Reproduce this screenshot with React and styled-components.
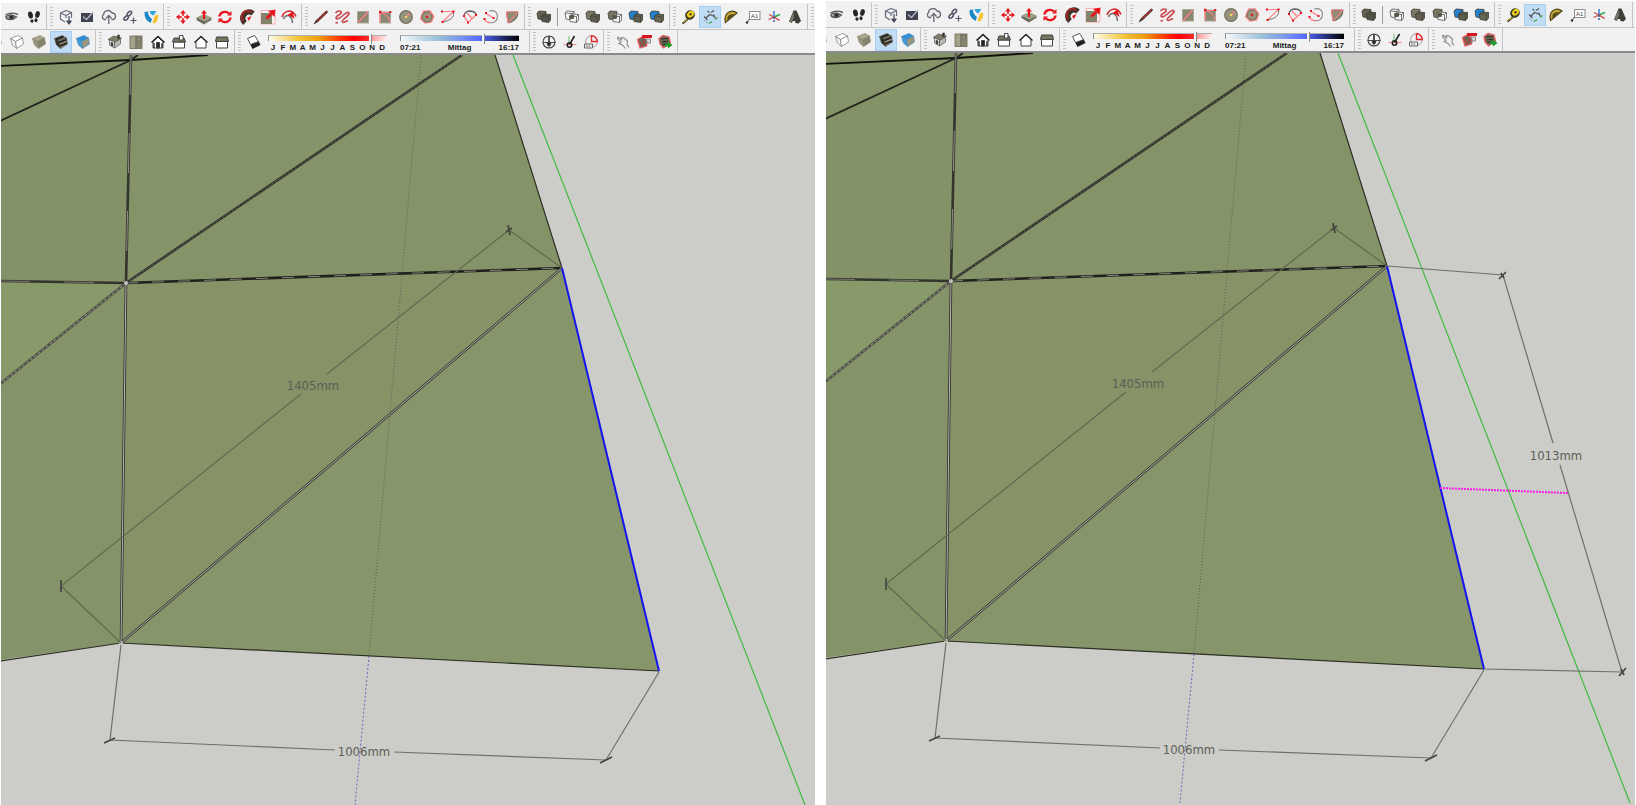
import React, { useState } from "react";
import styled, { createGlobalStyle } from "styled-components";

const colors = {
  bar: "#f1f1f1",
  line: "#c4c4c4",
  dark: "#8a8a8c",
  active: "#c1ddf5",
  activeBorder: "#a5d0f3",
  sky: "#ccccc8",
  red: "#e8141c",
  pink: "#ff7f86",
};

const GlobalStyle = createGlobalStyle`
  * {
    box-sizing: border-box;
  }
  body {
    margin: 0;
    background: #ffffff;
    font-family: "Liberation Sans", Arial, sans-serif;
  }
`;

const Cube = ({ top, left, right, edge = "#5c5a4c" }) => (
  <g stroke={edge} strokeWidth="0.7" strokeLinejoin="round">
    <path d="M3.500 6.500 L11 3.500 L15.500 6 L8.500 9.500Z" fill={top} />
    <path d="M3.500 6.500 L8.500 9.500 L9.500 16.500 L5.500 13Z" fill={left} />
    <path d="M8.500 9.500 L15.500 6 L16.500 12 L9.500 16.500Z" fill={right} />
  </g>
);

const Solids = ({ back, front, wireBack, wireFront }) => (
  <g strokeWidth="0.8" strokeLinejoin="round">
    <path
      d="M3 6 L5 4 L12 4.500 L12 11 L10 13 L4 12Z"
      fill={wireBack ? "#f4f4f4" : back}
      stroke={wireBack ? "#555" : "#3d3c33"}
    />
    {wireBack && <path d="M3 6 L10 6.500 L12 4.500 M10 6.500 L10 13" fill="none" stroke="#555" />}
    <path
      d="M7.500 9 L10 7 L16.500 7.500 L16.500 13 L14.500 15.500 L8 14.500Z"
      fill={wireFront ? "#f4f4f4" : front}
      stroke={wireFront ? "#555" : "#3d3c33"}
    />
    <path
      d="M7.500 9 L14.500 9.500 L16.500 7.500 M14.500 9.500 L14.500 15.500"
      fill="none"
      stroke={wireFront ? "#555" : "#45443a"}
    />
    {wireFront && <path d="M7.500 8.500 L12 7.500 V11.500 L8 12.500Z" fill="#5a584a" />}
  </g>
);

const House = ({ children }) => (
  <g stroke="#444" strokeWidth="1" strokeLinejoin="round">
    {children}
  </g>
);

const icons = {
  eye: (
    <g fill="none" stroke="#555" strokeWidth="1.400">
      <path d="M3.500 8 Q9 4.500 16 7.500" />
      <path d="M4 9.500 Q9 6.500 14.500 10 Q10 14 4.500 11.500Z" fill="#b5b5b5" />
      <circle cx="9.500" cy="10.300" r="2" fill="#222" />
    </g>
  ),
  steps: (
    <g fill="#262626">
      <ellipse cx="6.500" cy="8" rx="2.400" ry="3.600" transform="rotate(-12 6.500 8)" />
      <ellipse cx="8" cy="14" rx="1.600" ry="1.800" />
      <ellipse cx="13.500" cy="7.500" rx="2.300" ry="3.400" transform="rotate(14 13.500 7.500)" />
      <ellipse cx="12" cy="13.200" rx="1.500" ry="2" />
    </g>
  ),
  download: (
    <g fill="none" stroke="#66697a" strokeWidth="1.200" strokeLinejoin="round">
      <path d="M9 15 L4.500 12 L4.500 6 L10 3.500 L15.500 5.500 L15.500 11 M4.500 6 L10 8.500 L15.500 5.500 M10 8.500 L10 11" />
      <path d="M13 9 V16 M10.800 14 L13 17 L15.200 14Z" fill="#44475a" stroke="#44475a" />
    </g>
  ),
  picture: (
    <g>
      <rect x="4" y="6" width="12" height="9" fill="#3f4252" />
      <path d="M6 9.500 L9.500 12.500 L16 5" fill="none" stroke="#b3b5c0" strokeWidth="1.300" />
    </g>
  ),
  cloud: (
    <g fill="none" stroke="#666974" strokeWidth="1.300">
      <path d="M7 12.500 H5 A3 3 0 0 1 4.500 7.500 A4.500 4.500 0 0 1 13 6 A3.400 3.400 0 0 1 14.500 12.500 H12.500" />
      <path d="M9.800 17 V9 M7 11.500 L9.800 8.500 L12.600 11.500" />
    </g>
  ),
  link: (
    <g fill="none" stroke="#55586a" strokeWidth="1.500">
      <ellipse cx="6.200" cy="11" rx="2.700" ry="1.600" transform="rotate(-45 6.200 11)" />
      <ellipse cx="9.400" cy="6.500" rx="2.700" ry="1.600" transform="rotate(-45 9.400 6.500)" />
      <path d="M13.500 10.500 V16.500 M10.500 13.500 H16.500" strokeWidth="1.200" />
    </g>
  ),
  globe: (
    <g>
      <path d="M3.500 5 L7 4.500 Q7 9 11 12 L9.500 16 Q3 12.500 3.500 5Z" fill="#1b86c8" />
      <path d="M8.500 4 H15.500 L12.500 8.500 Q9.500 8 8.500 4Z" fill="#39a6dd" />
      <path d="M14 8.500 L17 7.500 Q18 13 13.500 16.500 L11.500 15.500 L13 11.500Z" fill="#f6c22c" />
    </g>
  ),
  move: (
    <g fill={colors.red}>
      <path d="M10 3 L12.800 6.500 H7.200Z M10 17 L12.800 13.500 H7.200Z M3 10 L6.500 7.200 V12.800Z M17 10 L13.500 7.200 V12.800Z" />
      <path d="M10 6 V14 M6 10 H14" stroke={colors.red} strokeWidth="1.600" />
      <circle cx="10" cy="10" r="1.200" fill="#fff" />
    </g>
  ),
  push: (
    <g>
      <path d="M2.500 10.500 L10 7 L17.500 10.500 L10 14Z" fill="#a09d86" />
      <path d="M2.500 10.500 L10 14 V17.500 L2.500 13Z" fill="#6a685a" />
      <path d="M17.500 10.500 L10 14 V17.500 L17.500 13Z" fill="#7a7765" />
      <path d="M9 12 V6.500 H7 L10 3 L13 6.500 H11 V12Z" fill={colors.red} />
    </g>
  ),
  rotate: (
    <g fill="none" stroke={colors.red} strokeWidth="2.400">
      <path d="M4.500 9.500 A5.500 5 0 0 1 14 6.500" />
      <path d="M15.500 10.500 A5.500 5 0 0 1 6 13.500" />
      <path d="M12 8.500 H16.500 V4Z M8 11.500 H3.500 V16Z" fill={colors.red} stroke="none" />
    </g>
  ),
  follow: (
    <g fill="none">
      <path d="M8 16 A5.500 5.500 0 0 1 16 6.500" stroke="#3d3326" strokeWidth="5.500" />
      <path d="M6.500 14 A5.500 5.500 0 0 1 14.500 5.500" stroke="#a32626" strokeWidth="2" />
      <path d="M10 11 L14.500 9 L12 14Z" fill={colors.red} />
    </g>
  ),
  scale: (
    <g>
      <path d="M3 3.500 H17 V17 H3Z" fill="none" stroke="#ffb0b4" />
      <rect x="3" y="6" width="11" height="11" fill="#85826c" />
      <path d="M8.500 11.500 L13 7" stroke={colors.red} strokeWidth="2.600" />
      <path d="M10 4 L17.500 2.500 L16.500 10Z" fill={colors.red} />
    </g>
  ),
  offset: (
    <g fill="none" strokeWidth="1.600">
      <path d="M3 10 Q5 4 11 4 Q15 5 17 9.500" stroke="#d22c30" />
      <path d="M4.500 12 Q6 8 9.500 8.500 Q13 10 13.500 16" stroke="#777" />
      <path d="M8 8.500 L13.500 4.500 L15.500 12 L12 9.500Z" fill={colors.red} />
    </g>
  ),
  pencil: (
    <g strokeLinecap="round">
      <path d="M5.500 14.500 L15.500 5" stroke="#6d3434" strokeWidth="2.600" />
      <path d="M3.500 16.500 L6 14" stroke="#333" strokeWidth="1.200" />
      <path d="M6.500 13.500 L15 5.500" stroke="#c03a3c" strokeWidth="1" />
    </g>
  ),
  freehand: (
    <path
      d="M3.500 6 Q6 3 9 4.500 Q10 6.500 6 8.500 Q2.500 11 5 12 Q8 11.500 12 7.500 Q17 3.500 17 7 Q15 10 12 12 Q8.500 15 11.500 15.500 L16 13.500 M3.500 16 L6 15.500"
      fill="none"
      stroke="#c9474c"
      strokeWidth="1.600"
    />
  ),
  rect: (
    <g>
      <rect x="4.500" y="4.500" width="11" height="11.500" fill="#8a8772" stroke="#aaa897" />
      <path d="M5 15.500 L15 5" stroke={colors.pink} strokeWidth="1.200" />
    </g>
  ),
  rotRect: (
    <g>
      <rect x="5" y="5" width="10.500" height="11" fill="#8a8772" stroke="#aaa897" />
      <path d="M5 15.500 V5 Q13 7 15.500 15.500 M5 5.500 H15" fill="none" stroke={colors.pink} strokeWidth="1.200" />
      <path d="M4 3.800 h2.400 v2.400 h-2.400Z M14.300 4 h2 v2 h-2Z" fill={colors.red} />
    </g>
  ),
  circle: (
    <g>
      <circle cx="10" cy="10" r="6.300" fill="#96937d" stroke="#74725f" strokeWidth="1.200" />
      <path d="M10 10 L14 6.500" stroke={colors.pink} strokeWidth="1.200" />
      <circle cx="10" cy="10" r="1.300" fill="#f0d060" />
    </g>
  ),
  polygon: (
    <g>
      <path
        d="M6.500 4 L13 3.800 L16.800 9 L14.500 15 L8 16 L3.500 11.500Z"
        fill="#96937d"
        stroke={colors.pink}
        strokeWidth="1.200"
      />
      <circle cx="10" cy="10" r="5" fill="#96937d" stroke="#77745f" />
      <path d="M10 10 L14 6.500" stroke={colors.pink} />
      <circle cx="10" cy="10" r="1.200" fill={colors.red} />
    </g>
  ),
  arc: (
    <g fill="none">
      <path d="M15.500 5 Q17 13 4.500 15" stroke="#77777a" />
      <path d="M4 4.500 H15.500 L4.500 15" stroke={colors.pink} strokeWidth="1.100" />
      <path d="M3 3.500 h2 v2 h-2Z M14.500 3.500 h2 v2 h-2Z M3.500 14 h2 v2 h-2Z" fill={colors.red} />
    </g>
  ),
  arc2: (
    <g fill="none">
      <path d="M4 9 Q4.500 4 10.500 4 Q16 4.500 16 8.500" stroke="#66666a" strokeWidth="1.300" />
      <path d="M4 9 L8 15.500 L16 8 M7 6 L12 11.500" stroke={colors.pink} strokeWidth="1.200" />
      <path d="M3 8 h2 v2 h-2Z M7 14.500 h2 v2 h-2Z M15 7 h2 v2 h-2Z" fill={colors.red} />
    </g>
  ),
  arc3: (
    <g fill="none">
      <path d="M8 4 Q16 2.500 16.500 9 Q16 17 8 15.500" stroke="#8a8a8c" strokeWidth="1.200" />
      <path d="M5 6.500 L12.500 11 M3.500 12 Q5 16 10 15.500" stroke={colors.pink} strokeWidth="1.200" />
      <path d="M4 5 h2 v2 h-2Z M11.500 10 h2 v2 h-2Z M2.500 11 h2 v2 h-2Z" fill={colors.red} />
    </g>
  ),
  pie: (
    <g>
      <path d="M4.500 5 H16 Q16 14 6 16Z" fill="#8f8c76" stroke="#666453" />
      <path d="M6 16 L16 5 M4.500 5 H16 M4.500 5 L6 16" stroke={colors.pink} strokeWidth="1.100" />
    </g>
  ),
  outer: <Solids back="#64624f" front="#56544a" />,
  intersect: <Solids wireBack wireFront />,
  union: <Solids back="#7c7963" front="#625f50" />,
  subtract: <Solids back="#77745f" wireFront />,
  trim: <Solids back="#2182cf" front="#605e4f" />,
  split: <Solids back="#2182cf" front="#6a6856" />,
  tape: (
    <g>
      <path d="M9 12 L3.500 16.500" stroke="#222" strokeWidth="1.800" />
      <ellipse cx="11" cy="8" rx="5" ry="4.600" fill="#3a3620" transform="rotate(-40 11 8)" />
      <ellipse cx="11.500" cy="7.300" rx="3.800" ry="3" fill="#f2d21c" transform="rotate(-40 11.500 7.300)" />
      <circle cx="11.500" cy="7.200" r="1.200" fill="#4b4530" />
      <path d="M8.500 12.500 L3.500 15.500" stroke="#e7cd2a" strokeWidth="1" />
    </g>
  ),
  dimension: (
    <g fill="none">
      <path d="M5.500 11.500 L9.500 7.500 L14.500 9.500" stroke="#555" strokeWidth="1.200" />
      <path d="M7.500 4 L9.500 5.500 M11 5.500 L14 3.500 M4 9.500 L7.500 13 M13.500 7.500 L15.500 11.500" stroke="#555" strokeWidth="1.200" />
      <path d="M4.500 13.500 L8 16.500" stroke="#777" strokeDasharray="1 1" />
      <path d="M9 16.500 L12 14.500 M15 12.500 L17.500 10.500" stroke="#47a84b" strokeWidth="1.500" />
    </g>
  ),
  protractor: (
    <g stroke="#4d4417" strokeWidth="1.200">
      <path d="M4.500 15.500 Q2.500 7 9 4.500 Q13 3.500 16 6Z" fill="#c3a63a" />
      <path d="M7 12 Q6.500 8.500 11.500 7.800Z" fill="#f3f0d0" />
    </g>
  ),
  label: (
    <g>
      <rect x="6.500" y="4.500" width="10.500" height="8" fill="#fff" stroke="#8c8c8c" />
      <path d="M6.500 12 L4 15.500" stroke="#555" />
      <circle cx="4" cy="15.500" r="1.300" fill="#333" />
      <text x="8" y="11" fontSize="6" fill="#444">
        A1
      </text>
    </g>
  ),
  axes: (
    <g fill="none" strokeWidth="1.400">
      <path d="M10 10 V4" stroke="#2b6fd6" />
      <path d="M10 10 L16 7.500" stroke="#2ba84a" />
      <path d="M10 10 L15.500 13.500" stroke="#e0343a" />
      <path d="M10 10 L4.500 12.500 M10 10 L5 7.500" stroke="#c7474c" strokeWidth="1.200" />
      <path d="M10 10 V15" stroke="#2b52a6" strokeDasharray="2 1" />
    </g>
  ),
  text3d: (
    <g>
      <path d="M8.500 3.500 L11.500 3.500 L16 14 L13.500 16.500 L10.500 16 L10 14 L8 14 L6.500 16 L4 14.500Z" fill="#3f3e38" />
      <path d="M8.500 4.500 L4.500 14.500 L7 15 L9 10Z" fill="#7b796b" />
    </g>
  ),
  wire: <Cube top="#efefef" left="#ddd" right="#fafafa" edge="#999" />,
  hidden: <Cube top="#ffffff" left="#f4f4f4" right="#ffffff" edge="#777" />,
  shaded: <Cube top="#aaa68e" left="#98957e" right="#85826c" edge="#8c8973" />,
  textured: (
    <g>
      <Cube top="#6b6957" left="#2d2c27" right="#8f8c75" />
      <path d="M5 7.500 L12.500 4.500 M8.500 10.500 L15.500 7.500 M9 14 L16 11" stroke="#1e1d1a" strokeWidth="1.600" />
    </g>
  ),
  mono: <Cube top="#2a8ddd" left="#3e9be0" right="#99967f" edge="#4a86b0" />,
  iso: (
    <g strokeWidth="0.700" stroke="#55534a">
      <path d="M3 7.500 L8.500 4 L16.500 6 L11 10.500Z" fill="#807d68" />
      <path d="M4.500 8 V13 L9.500 16 V10Z" fill="#f2f2f2" />
      <path d="M9.500 10.500 L15.500 7 V12 L9.500 16Z" fill="#bbb" />
      <path d="M12.500 3 h2 v4 h-2Z M6 10 v3.500 l2 1 v-3.500Z" fill="#333" />
    </g>
  ),
  top: (
    <g stroke="#6c6a58" strokeWidth="0.800">
      <rect x="4" y="4" width="6" height="12.500" fill="#a5a28b" />
      <rect x="10" y="4" width="6" height="12.500" fill="#87846e" />
      <path d="M11.500 6 h2.500 v3 h-2.500Z" fill="#aaa" />
    </g>
  ),
  front: (
    <House>
      <path d="M5 9.500 V16 H15 V9.500 L10 5Z" fill="#fff" />
      <path d="M3.500 10.500 L10 4.500 L16.500 10.500" fill="none" stroke="#222" strokeWidth="1.600" />
      <path d="M8.500 16 V10.500 H11.500 V16Z" fill="#222" />
      <path d="M6 11 V16 M14 11 V16" stroke="#222" strokeWidth="1.300" />
    </House>
  ),
  right: (
    <House>
      <path d="M4.500 10 H15.500 V16 H4.500Z" fill="#fff" />
      <path d="M3.500 10 L5 6 H15 L16.500 10Z" fill="#77745f" />
      <path d="M10.500 3.500 h3.500 v4.500 h-3.500Z" fill="#fff" />
    </House>
  ),
  back: (
    <House>
      <path d="M5 9 V16 H15 V9 L10 4.500Z" fill="#fff" />
      <path d="M3.500 10.500 L10 4.500 L16.500 10.500" fill="none" stroke="#222" strokeWidth="1.400" />
    </House>
  ),
  left: (
    <House>
      <path d="M4.500 9.500 H15.500 V16 H4.500Z" fill="#fff" />
      <path d="M3.500 9.500 L4.500 5 H15.500 L16.500 9.500Z" fill="#77745f" />
    </House>
  ),
  shadow: (
    <g strokeLinejoin="round">
      <path d="M6 12 L8.500 17 L16.500 13 L14.500 9Z" fill="#222" />
      <path d="M3.500 6.500 L10.500 3.500 L14.500 9.500 L6.500 12.500Z" fill="#fff" stroke="#555" />
    </g>
  ),
  compass: (
    <g fill="none" stroke="#444">
      <circle cx="10" cy="10" r="6" strokeWidth="1.100" />
      <path d="M3.500 10.500 H16.500 M10 4 V16" />
      <circle cx="10" cy="12" r="1.800" fill="#222" />
      <path d="M10 4 V11" strokeWidth="1.600" />
    </g>
  ),
  north: (
    <g fill="none">
      <path d="M3.500 12.500 H16.500" stroke="#ff8f8f" strokeWidth="1.200" />
      <path d="M9 4 V12" stroke="#7fc983" strokeWidth="1.200" />
      <path d="M9.500 12.500 L14.500 4" stroke="#222" strokeWidth="1.600" />
      <circle cx="9.500" cy="13" r="2.200" stroke="#222" strokeWidth="1.600" />
    </g>
  ),
  angle: (
    <g fill="none">
      <circle cx="10.500" cy="9.500" r="5.800" stroke="#9b9b9b" />
      <path d="M10.500 3.700 A5.800 5.800 0 0 1 16.300 9.500 L10.500 9.500Z" stroke="#e52a30" strokeWidth="1.400" />
      <path d="M3.500 12 h8 v4 h-8Z" fill="#eee" stroke="#666" />
      <path d="M5 14 H10" stroke="#555" strokeDasharray="1.500 1" />
    </g>
  ),
  hand: (
    <path
      d="M5 5 L8.500 8 L8.500 5.500 L11 6 L14.500 9 L14 12.500 L16 15.500 M5 5 L4.500 6.500 L8 10.500 L6 11.500 L10 13.500 L12.500 16.500"
      fill="none"
      stroke="#8a8a8c"
      strokeWidth="1.100"
    />
  ),
  component: (
    <g>
      <path d="M3.500 7.500 L8 5 L13.500 8 L12.500 14 L6 16Z" fill="#6b6755" stroke="#ef5a60" strokeWidth="1.200" />
      <path d="M5.500 9 L8 14 M11 8 L9 12.500" stroke="#c33" />
      <rect x="8" y="3" width="10" height="3" fill="#d61920" />
      <path d="M12 7 h4.500 v4 h-3Z" fill="#ddd" stroke="#888" />
    </g>
  ),
  play: (
    <g>
      <path d="M4 6.500 L8 3.500 L14 5 L15.500 11 L8.500 16 L5 12Z" fill="#6b6755" stroke="#ef5a60" strokeWidth="1.200" />
      <path d="M6 7 L13 6.500 M7 10 L13 9 M7.500 13 L12 11" stroke="#2e2c26" strokeWidth="1.200" />
      <path d="M10 11.500 H13 V9.500 L17.500 13 L13 16.500 V14.500 H10Z" fill="#1f9d2b" />
    </g>
  ),
};

const drawingTools = [
  { width: 46, items: ["eye", "steps"], noGrip: true },
  { width: 117, items: ["download", "picture", "cloud", "link", "globe"] },
  { width: 138, items: ["move", "push", "rotate", "follow", "scale", "offset"] },
  {
    width: 223,
    items: ["pencil", "freehand", "rect", "rotRect", "circle", "polygon", "arc", "arc2", "arc3", "pie"],
  },
  { width: 145, items: ["outer", "|", "intersect", "union", "subtract", "trim", "split"] },
  { width: 138, items: ["tape", "dimension", "protractor", "label", "axes", "text3d"] },
];

const months = ["J", "F", "M", "A", "M", "J", "J", "A", "S", "O", "N", "D"];

const Tool = ({ name, active }) => (
  <ToolButton type="button" aria-label={name} aria-pressed={!!active} $active={active}>
    <ToolIcon viewBox="0 0 20 20" aria-hidden="true">
      {icons[name]}
    </ToolIcon>
  </ToolButton>
);

const ToolGroup = ({ width, items, noGrip, active }) => (
  <Group $width={width}>
    {!noGrip && <Grip />}
    <Tools>
      {items.map((name) =>
        name === "|" ? <Divider key={name} /> : <Tool key={name} name={name} active={name === active} />
      )}
    </Tools>
  </Group>
);

const ShadowSettings = ({ id }) => {
  const [day, setDay] = useState(87);
  const [time, setTime] = useState(70);
  return (
    <Group $width={295}>
      <Grip />
      <ShadowTools>
        <Tool name="shadow" />
        <SliderBox>
          <Slider
            id={`${id}-day`}
            aria-label="Datum"
            type="range"
            min="0"
            max="100"
            value={day}
            onChange={(e) => setDay(Number(e.target.value))}
            $track="linear-gradient(90deg, #fffbe8, #f3c53a 25%, #f0a010 42%, #ff2a00 62%, #ff0000 72%, #f53030 85%, #ffa0a0 88%, #fff0f0)"
          />
          <SliderLabel htmlFor={`${id}-day`}>
            {months.map((month, i) => (
              <Month key={i}>{month}</Month>
            ))}
          </SliderLabel>
        </SliderBox>
        <SliderBox>
          <Slider
            id={`${id}-time`}
            aria-label="Uhrzeit"
            type="range"
            min="0"
            max="100"
            value={time}
            onChange={(e) => setTime(Number(e.target.value))}
            $track="linear-gradient(90deg, #f4f8fa, #9cc2da 30%, #7c9cee 48%, #5a6cff 66%, #3f50c8 75%, #1c2460 88%, #000000)"
          />
          <SliderLabel htmlFor={`${id}-time`}>
            <span>07:21</span>
            <span>Mittag</span>
            <span>16:17</span>
          </SliderLabel>
        </SliderBox>
      </ShadowTools>
    </Group>
  );
};

const Seam = ({ d, edge = "#33342d", core = "#77776f", dash }) => (
  <g fill="none">
    <path d={d} stroke={edge} strokeWidth="2.600" />
    <path d={d} stroke={core} strokeWidth="1" strokeDasharray={dash} />
  </g>
);

const Dimension = ({ lines, ticks, text, x, y, stroke = "#6f706b" }) => (
  <g fill="none">
    <path d={lines} stroke={stroke} strokeWidth="1.200" />
    <path d={ticks} stroke="#444541" strokeWidth="1.700" />
    <DimensionText x={x} y={y}>
      {text}
    </DimensionText>
  </g>
);

const Model = ({ measured }) => (
  <Viewport role="img" aria-label="Modell">
    <g transform="translate(-1 -55)">
      <path d="M0 55 H495 L562 268 L659 671 L121 643 L0 660Z" fill="#859468" />
      <path d="M0 121 L131 60 L126 283 L0 281Z" fill="#839367" />
      <path d="M0 281 L126 283 L0 384Z" fill="#889a6a" />
      <path d="M126 283 L562 268 L121 643Z" fill="#859367" />
      <path d="M562 268 L659 671 L121 643Z" fill="#86966a" />

      <path d="M421 55 L369 656" stroke="#56635f" strokeDasharray="1 2" />
      <path d="M369 656 L355 805" stroke="#6c66c4" strokeDasharray="2 2" />
      <path d="M513 55 L805 805" stroke="#3fbb42" strokeWidth="1.200" />

      <path d="M0 661 L121 643 L659 671 M495 55 L562 268" fill="none" stroke="#2c2e24" strokeWidth="1.200" />
      <path d="M0 66 L131 60 L208 55" fill="none" stroke="#11120e" strokeWidth="1.800" />
      <path d="M0 121 L131 60 L138 55" fill="none" stroke="#22231d" strokeWidth="1.800" />
      <Seam d="M126 283 L462 55" core="#62635a" dash="2 2" />
      <Seam d="M0 281 L126 283" dash="30 34" />
      <Seam d="M126 283 L562 268" core="#85867c" dash="12 14" edge="#1f201b" />
      <Seam d="M126 283 L0 384" core="#a4a49b" dash="3 2" edge="#4a4b43" />
      <Seam d="M562 268 L121 643" core="#b0b0a9" edge="#3e3f38" />
      <Seam d="M131 55 L126 283" core="#8e8e86" dash="40 38" />
      <Seam d="M126 283 L121 643" core="#b8b8b2" edge="#2a2b25" />
      <circle cx="126" cy="283" r="2" fill="#c4c4be" />
      <circle cx="121" cy="643" r="2" fill="#c4c4be" />
      <path d="M562 268 L659 671" stroke="#1414f0" strokeWidth="2" />

      <Dimension
        text="1405mm"
        x={313}
        y={390}
        stroke="#616951"
        lines="M562 268 L509 230 L327 374 M301 394 L61 586 L121 643"
        ticks="M508 225 L510 235 M61 580 V592 M506 232 L512 228"
      />
      <Dimension
        text="1006mm"
        x={364}
        y={756}
        lines="M121 645 L110 740 L335 750 M394 752 L606 760 L659 672"
        ticks="M104 743 L115 738 M600 763 L612 757"
      />
      {measured && (
        <g>
          <path d="M615 490 L743 495" stroke="#ff1ee6" strokeWidth="2" strokeDasharray="2 1" />
          <Dimension
            text="1013mm"
            x={731}
            y={462}
            lines="M562 268 L678 277 L728 445 M735 467 L797 674 L659 671"
            ticks="M674 281 L681 274 M676 275 L679 280 M794 678 L801 670 M796 671 L799 677"
          />
        </g>
      )}
    </g>
  </Viewport>
);

const ModelWindow = ({ id, measured }) => (
  <Window $top={measured ? 1 : 3}>
    <ToolRow>
      {drawingTools.map((group) => (
        <ToolGroup key={group.items[0]} {...group} active="dimension" />
      ))}
      <Grip />
    </ToolRow>
    <ToolRow $last>
      <Group $width={95}>
        <StyleTools>
          {["wire", "hidden", "shaded", "textured", "mono"].map((name) => (
            <Tool key={name} name={name} active={name === "textured"} />
          ))}
        </StyleTools>
      </Group>
      <ToolGroup width={139} items={["iso", "top", "front", "right", "back", "left"]} />
      <ShadowSettings id={id} />
      <ToolGroup width={74} items={["compass", "north", "angle"]} />
      <ToolGroup width={74} items={["hand", "component", "play"]} />
    </ToolRow>
    <Model measured={measured} />
  </Window>
);

const App = () => (
  <>
    <GlobalStyle />
    <Page>
      <ModelWindow id="before" />
      <ModelWindow id="after" measured />
    </Page>
  </>
);

const Page = styled.main`
  display: grid;
  grid-template-columns: 814fr 809fr;
  gap: 11px;
  min-height: 100vh;
  padding: 0 1px;
`;

const Window = styled.section`
  display: flex;
  flex-direction: column;
  min-width: 0;
  padding-top: ${(props) => props.$top}px;
`;

const ToolRow = styled.div`
  display: flex;
  height: ${(props) => (props.$last ? 25 : 27)}px;
  padding-top: ${(props) => (props.$last ? 0 : 1)}px;
  overflow: hidden;
  background: ${colors.bar};
  border-bottom: ${(props) => (props.$last ? `2px solid ${colors.dark}` : `1px solid ${colors.line}`)};
`;

const Group = styled.div`
  display: flex;
  flex: 0 0 ${(props) => props.$width}px;
  align-items: center;
  padding-right: 1px;
  overflow: hidden;
  border-right: 1px solid ${colors.line};
`;

const Grip = styled.span`
  flex: none;
  align-self: center;
  width: 3px;
  height: 20px;
  margin: 0 2px 0 3px;
  background: repeating-linear-gradient(#c2c2c2 0 1px, transparent 1px 3px);
`;

const Tools = styled.div`
  display: flex;
  flex: 1;
  align-items: center;
  min-width: 0;
`;

/* the first tool is scrolled half out of the window */
const StyleTools = styled(Tools)`
  justify-content: flex-end;

  button {
    flex: 0 0 22px;
  }
`;

const ShadowTools = styled(Tools)`
  gap: 4px;
  padding-right: 9px;

  button {
    flex: 0 0 21px;
  }
`;

const ToolButton = styled.button`
  display: flex;
  flex: 1;
  align-items: center;
  justify-content: center;
  min-width: 0;
  height: 22px;
  padding: 0;
  background: ${(props) => (props.$active ? colors.active : "transparent")};
  border: 1px solid ${(props) => (props.$active ? colors.activeBorder : "transparent")};
`;

const ToolIcon = styled.svg`
  flex: none;
  width: 20px;
  height: 20px;
`;

const Divider = styled.span`
  width: 1px;
  height: 18px;
  margin: 0 3px;
  background: #9a9a9a;
`;

const SliderBox = styled.div`
  display: flex;
  flex: 1;
  flex-direction: column;
  padding-top: 2px;

  & + & {
    margin-left: 9px;
  }
`;

const Slider = styled.input`
  width: 100%;
  height: 10px;
  margin: 0;
  appearance: none;
  background: transparent;

  &::-webkit-slider-runnable-track {
    height: 6px;
    background: ${(props) => props.$track};
    border-top: 1px solid #b0b0b0;
    border-left: 1px solid #8c8c8c;
  }

  &::-webkit-slider-thumb {
    width: 3px;
    height: 10px;
    margin-top: -2px;
    appearance: none;
    background: #f4f4f4;
    border-right: 1px solid #8a8a8a;
  }
`;

const SliderLabel = styled.label`
  display: flex;
  justify-content: space-between;
  color: #1a1a1a;
  font-size: 8px;
  font-weight: bold;
  line-height: 9px;
`;

const Month = styled.span`
  flex: 1;
  text-align: center;
`;

const Viewport = styled.svg`
  display: block;
  flex: 1;
  width: 100%;
  min-height: 0;
  overflow: hidden;
  background: ${colors.sky};
`;

const DimensionText = styled.text`
  fill: #5c5e57;
  font-family: "DejaVu Sans Condensed", "DejaVu Sans", sans-serif;
  font-size: 13px;
  text-anchor: middle;
`;

export default App;
